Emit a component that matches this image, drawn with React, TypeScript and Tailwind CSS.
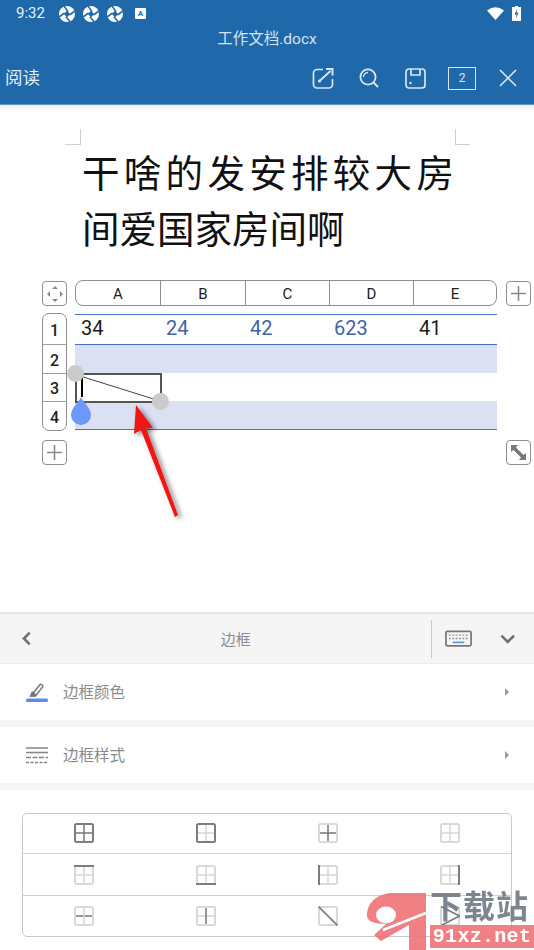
// App.tsx — vista de documento con tabla y panel de bordes
const FONT = "font-['Roboto','Noto_Sans_CJK_SC',sans-serif]";

const columns = [
  { name: "A", head: "w-[85px]", width: "w-[85px]", value: "34", color: "text-[#1b1b1b]" },
  { name: "B", head: "w-[85px]", width: "w-[84px]", value: "24", color: "text-[#3f63a8]" },
  { name: "C", head: "w-[84px]", width: "w-[84px]", value: "42", color: "text-[#3f63a8]" },
  { name: "D", head: "w-[84px]", width: "w-[85px]", value: "623", color: "text-[#3f63a8]" },
  { name: "E", head: "w-[82px]", width: "w-[84px]", value: "41", color: "text-[#1b1b1b]" },
];

const rowHeaders = [
  { n: "1", height: "h-[31px]" },
  { n: "2", height: "h-[29px]" },
  { n: "3", height: "h-[28px]" },
  { n: "4", height: "h-[28px]" },
];

const Pinwheel = () => (
  <svg width="16" height="16" viewBox="0 0 16 16">
    <circle cx="8" cy="8" r="8" fill="#fff" />
    <path d="M8 4.800L11.200 8 8 11.200 4.800 8z" fill="#1f69ab" />
    <path d="M9 5.500L5 0M10.500 9L16 5M7 10.500L11 16M5.500 7L0 11" stroke="#1f69ab" strokeWidth="1.600" />
  </svg>
);

const SmallBox = ({ children }: { children: React.ReactNode }) => (
  <div className="flex h-[25px] w-[25px] shrink-0 items-center justify-center rounded-[4px] border border-[#8f8f8f] bg-white">
    {children}
  </div>
);

const Plus = () => (
  <svg width="17" height="17" viewBox="0 0 17 17" stroke="#8a8a8a" strokeWidth="1.600">
    <path d="M8.500 1v15M1 8.500h15" />
  </svg>
);

// dark: qué trazos de la cuadrícula van oscuros
type Dark = "all" | "outer" | "inner" | "none" | "top" | "bottom" | "h" | "v" | "left" | "right" | "diag" | "diag2";

const GridIcon = ({ dark }: { dark: Dark }) => {
  const d = "#7d7d7d";
  const l = "#d9d9d9";
  const outer = dark === "all" || dark === "outer" ? d : l;
  const h = dark === "all" || dark === "inner" || dark === "h" ? d : l;
  const v = dark === "all" || dark === "inner" || dark === "v" ? d : l;
  if (dark === "diag" || dark === "diag2") {
    return (
      <svg width="20" height="20" viewBox="0 0 20 20" fill="none">
        <rect x="1" y="1" width="18" height="18" rx="1.500" stroke={l} strokeWidth="2" />
        {dark === "diag" ? (
          <path d="M0.500 0.500L19.500 19.500" stroke={d} strokeWidth="1.600" />
        ) : (
          <path d="M1 19.500L19.500 10L1 0.500" stroke={d} strokeWidth="1.600" />
        )}
      </svg>
    );
  }
  return (
    <svg width="20" height="20" viewBox="0 0 20 20" fill="none">
      <rect x="1" y="1" width="18" height="18" rx="1.500" stroke={outer} strokeWidth="2" />
      <path d="M2 10h16" stroke={h} strokeWidth="1.600" />
      <path d="M10 2v16" stroke={v} strokeWidth="1.600" />
      {dark === "top" && <path d="M0 1h20" stroke={d} strokeWidth="2" />}
      {dark === "bottom" && <path d="M0 19h20" stroke={d} strokeWidth="2" />}
      {dark === "left" && <path d="M1 0v20" stroke={d} strokeWidth="2" />}
      {dark === "right" && <path d="M19 0v20" stroke={d} strokeWidth="2" />}
    </svg>
  );
};

const borderIcons: Dark[] = ["all", "outer", "inner", "none", "top", "bottom", "left", "right", "h", "v", "diag", "diag2"];

const Row = ({ icon, label }: { icon: React.ReactNode; label: string }) => (
  <div className="flex h-[56px] items-center bg-white pl-[26px] pr-[25px]">
    <div className="w-[37px]">{icon}</div>
    <span className="flex-1 pt-[3px] text-[15.5px] text-[#8a8a8a]">{label}</span>
    <svg width="4" height="8" viewBox="0 0 4 8">
      <path d="M0 0l4 4-4 4z" fill="#9a9a9a" />
    </svg>
  </div>
);

export default function App() {
  return (
    <div className={`relative flex h-[950px] w-[534px] flex-col overflow-hidden bg-white ${FONT}`}>
      {/* Cabecera */}
      <header className="h-[105px] border-b border-[#5f97c9] bg-[#1f69ab] text-white">
        <div className="flex h-[27px] items-center pl-[16px] pr-[13px]">
          <span className="mr-[14px] text-[15px] text-[#eaf1f7]">9:32</span>
          <div className="flex items-center gap-[8px]">
            <Pinwheel />
            <Pinwheel />
            <Pinwheel />
          </div>
          <div className="ml-[12px] flex h-[11px] w-[11px] items-center justify-center rounded-[1px] bg-white text-[8px] font-bold text-[#1f69ab]">
            A
          </div>
          <div className="flex-1" />
          <svg width="17" height="13" viewBox="0 0 17 13" className="mr-[8px]">
            <path d="M0 3.400Q8.500-2.800 17 3.400L8.500 13z" fill="#fff" />
          </svg>
          <svg width="9" height="15" viewBox="0 0 9 15">
            <path d="M3 0h3v1h3v14H0V1h3z" fill="#fff" />
            <path d="M5 3L2.500 8.500h2L3.800 12.500 6.600 6.800H4.700z" fill="#1f69ab" />
          </svg>
        </div>
        <div className="h-[25px] text-center text-[15.5px] leading-[24px] text-[#d5e3ef]">工作文档.docx</div>
        <div className="flex h-[52px] items-center pl-[5px] pr-[17px]">
          <span className="flex-1 text-[17.5px] text-[#e3edf5]">阅读</span>
          <svg width="22" height="22" viewBox="0 0 22 22" fill="none" stroke="#d9e6f1" strokeWidth="1.700" className="mr-[25px]">
            <path d="M11 2.500H5a3.500 3.500 0 0 0-3.500 3.500v11.500A3.500 3.500 0 0 0 5 21h12a3.500 3.500 0 0 0 3.500-3.500V12" />
            <path d="M8 13.500L18.500 4M14 2H20.500v6.500" strokeWidth="2" />
            <circle cx="7.500" cy="14" r="1.600" fill="#d9e6f1" stroke="none" />
          </svg>
          <svg width="20" height="20" viewBox="0 0 20 20" fill="none" stroke="#d9e6f1" strokeWidth="1.800" className="mr-[26px]">
            <circle cx="9" cy="9" r="7.600" />
            <path d="M14.500 14.500L19 19" />
            <path d="M4.500 9a4.500 4.500 0 0 1 4.500-4.500" strokeWidth="1.300" />
          </svg>
          <svg width="21" height="21" viewBox="0 0 21 21" fill="none" stroke="#d9e6f1" strokeWidth="1.700" className="mr-[22px]">
            <rect x="1" y="1" width="19" height="19" rx="3" />
            <path d="M6 1v6h9V1" />
            <circle cx="5.500" cy="15" r="1.200" fill="#d9e6f1" stroke="none" />
          </svg>
          <div className="mr-[23px] flex h-[23px] w-[28px] items-center justify-center border border-[#d9e6f1] text-[12px] text-[#d9e6f1]">
            2
          </div>
          <svg width="18" height="18" viewBox="0 0 18 18" stroke="#e3edf5" strokeWidth="1.500">
            <path d="M1 1l16 16M17 1L1 17" />
          </svg>
        </div>
      </header>

      {/* Documento */}
      <main className="flex h-[507px] flex-col">
        <div className="h-[8px] bg-gradient-to-b from-[#f0f0f0] to-white" />
        <div className="mt-[16px] flex justify-between pl-[65px] pr-[64px]">
          <div className="h-[16px] w-[16px] border-b border-r border-[#cfcfcf]" />
          <div className="h-[16px] w-[15px] border-b border-l border-[#cfcfcf]" />
        </div>
        <div className="pl-[82px] pt-[1px] text-[37.5px] leading-[56px] text-[#111]">
          <div className="tracking-[4.300px]">干啥的发安排较大房</div>
          <div>间爱国家房间啊</div>
        </div>

        {/* Tabla */}
        <div className="relative mt-[22px] pl-[42px] pr-[3px]">
          <div className="flex items-end">
            <SmallBox>
              <svg width="18" height="18" viewBox="0 0 18 18" fill="#8a8a8a">
                <path d="M9 1l3 3H6zM9 17l-3-3h6zM1 9l3-3v6zM17 9l-3 3V6z" />
              </svg>
            </SmallBox>
            <div className="ml-[8px] mr-[9px] flex h-[26px] w-[422px] shrink-0 rounded-[8px] border border-[#8f8f8f]">
              {columns.map((c, i) => (
                <div
                  key={c.name}
                  className={`${c.head} flex shrink-0 items-center justify-center pt-[2px] text-[15px] text-[#222] ${i < 4 ? "border-r border-[#8f8f8f]" : ""}`}
                >
                  {c.name}
                </div>
              ))}
            </div>
            <SmallBox>
              <Plus />
            </SmallBox>
          </div>

          <div className="mt-[7px] flex gap-[8px]">
            <div className="flex h-[118px] w-[25px] shrink-0 flex-col rounded-[7px] border border-[#8f8f8f] text-[16px] font-medium text-[#222]">
              {rowHeaders.map((r, i) => (
                <div
                  key={r.n}
                  className={`${r.height} flex items-center justify-center pt-[3px] ${i < 3 ? "border-b border-[#a0a0a0]" : ""}`}
                >
                  {r.n}
                </div>
              ))}
            </div>
            <div className="mt-[1px] h-[116px] w-[422px] shrink-0 border-b border-t border-[#4472c4]">
              <div className="flex h-[30px] border-b border-[#4472c4] text-[20px] leading-[27px]">
                {columns.map((c) => (
                  <div key={c.name} className={`${c.width} shrink-0 pl-[6px] ${c.color}`}>
                    {c.value}
                  </div>
                ))}
              </div>
              <div className="h-[28px] bg-[#dbe1f3]" />
              <div className="h-[28px] bg-white" />
              <div className="h-[28px] bg-[#dbe1f3]" />
            </div>
          </div>

          <div className="mt-[9px] flex justify-between">
            <SmallBox>
              <Plus />
            </SmallBox>
            <SmallBox>
              <svg width="19" height="19" viewBox="0 0 19 19" fill="#7a7a7a">
                <path d="M2 2h7L7 4.500 14.500 12 17 10v7h-7l2-2.500L4.500 7 2 9z" />
              </svg>
            </SmallBox>
          </div>

          {/* Selección sobre la celda */}
          <div className="absolute left-[75px] top-[93px] h-[30px] w-[87px] border-2 border-[#555]">
            <svg width="83" height="26" viewBox="0 0 83 26" className="absolute left-0 top-0">
              <path d="M0 0L83 26" stroke="#444" strokeWidth="1" />
            </svg>
            <div className="absolute left-[4px] top-0 h-[22px] w-[2px] bg-black" />
          </div>
          <div className="absolute left-[67px] top-[85px] h-[17px] w-[17px] rounded-full bg-[#cbcbcb]" />
          <div className="absolute left-[152px] top-[113px] h-[17px] w-[17px] rounded-full bg-[#cbcbcb]" />
          <svg width="20" height="28" viewBox="0 0 20 28" className="absolute left-[71px] top-[117px]">
            <path d="M10 0C12 5 20 11 20 18A10 10 0 0 1 0 18C0 11 8 5 10 0z" fill="#6c98fb" />
          </svg>
        </div>
      </main>

      {/* Flecha de la anotación */}
      <svg width="80" height="140" viewBox="0 0 80 140" className="absolute left-[120px] top-[395px]">
        <defs>
          <filter id="arrow-shadow" x="-30%" y="-30%" width="170%" height="170%">
            <feDropShadow dx="3" dy="2" stdDeviation="2.500" floodColor="#000" floodOpacity="0.5" />
          </filter>
        </defs>
        <path d="M16 10L33 33 26 33 58 120 55 122 21 35 14 39z" fill="#f11414" filter="url(#arrow-shadow)" />
      </svg>

      {/* Panel de bordes */}
      <section className="flex flex-1 flex-col border-t-2 border-[#e4e4e4] bg-[#f5f5f5]">
        <div className="flex h-[49px] items-center pl-[21px] pr-[19px]">
          <svg width="11" height="15" viewBox="0 0 11 15" fill="none" stroke="#6f6f6f" strokeWidth="2.600">
            <path d="M9 1.500L3 7.500l6 6" />
          </svg>
          <span className="ml-[189px] w-[32px] pt-[3px] text-[15px] text-[#8a8a8a]">边框</span>
          <div className="ml-[179px] h-[38px] w-px bg-[#c9c9c9]" />
          <svg width="28" height="18" viewBox="0 0 28 18" fill="none" className="ml-[13px]">
            <rect x="1" y="1" width="26" height="15" rx="1.500" stroke="#777" strokeWidth="1.800" />
            <path d="M4 5h20M4 8.500h20" stroke="#999" strokeWidth="1.400" strokeDasharray="2 1.500" />
            <path d="M8 12.500h12" stroke="#5b8fe0" strokeWidth="1.600" />
          </svg>
          <svg width="16" height="10" viewBox="0 0 16 10" fill="none" stroke="#6f6f6f" strokeWidth="2.600" className="ml-[28px]">
            <path d="M1.500 1.500L8 8l6.500-6.500" />
          </svg>
        </div>
        <div className="border-t border-[#ececec]">
          <Row
            label="边框颜色"
            icon={
              <svg width="22" height="19" viewBox="0 0 22 19">
                <path d="M5 13L14 1.500c1-1 3.500 1 2.800 2.200L9.500 13z" fill="none" stroke="#777" strokeWidth="1.500" />
                <path d="M3.500 13.500L6 8l4 3-1 2.500z" fill="#777" />
                <rect x="0" y="15.500" width="22" height="3.500" rx="1.500" fill="#5b8fe0" />
              </svg>
            }
          />
        </div>
        <div className="mt-[7px]">
          <Row
            label="边框样式"
            icon={
              <svg width="22" height="17" viewBox="0 0 22 17" stroke="#858585" strokeWidth="1.400">
                <path d="M0 1h22M0 5.500h22" />
                <path d="M0 10.500h22" strokeDasharray="5 1.500" />
                <path d="M0 15.500h22" strokeDasharray="3 1.500" />
              </svg>
            }
          />
        </div>
        <div className="mt-[7px] flex-1 bg-white px-[22px] pt-[23px]">
          <div className="grid h-[124px] w-[490px] grid-cols-4 grid-rows-[40px_42px_40px] rounded-[5px] border border-[#c9c9c9]">
            {borderIcons.map((icon, i) => (
              <div
                key={icon}
                className={`flex items-center justify-center ${i < 8 ? "border-b border-[#d2d2d2]" : ""} ${i < 4 ? "pb-[2px]" : ""}`}
              >
                <GridIcon dark={icon} />
              </div>
            ))}
          </div>
        </div>
      </section>

      {/* Marca de agua */}
      <div className="absolute left-[364px] top-[891px] flex h-[59px] w-[170px] opacity-90">
        <svg width="66" height="59" viewBox="0 0 66 59" className="shrink-0">
          <path d="M3 25C3 10 15 2 30 2L62 2 62 59 45 59 45 34 17 50 10 44 22 33C10 33 3 30 3 25z" fill="#ef7377" />
          <ellipse cx="22" cy="24" rx="10" ry="8.500" fill="#fff" />
          <path d="M19 39L62 22" stroke="#fff" strokeWidth="2.500" />
        </svg>
        <div className="flex flex-col">
          <div className="whitespace-nowrap text-[32px] font-bold leading-[32px] tracking-[1px] text-[#6f7a84]">下载站</div>
          <div className="mt-[2px] flex h-[23px] w-[104px] items-center justify-center bg-[#ef7377] font-['Liberation_Mono',monospace] text-[20px] font-bold tracking-[0.300px] text-white">
            91xz.net
          </div>
        </div>
      </div>
    </div>
  );
}
